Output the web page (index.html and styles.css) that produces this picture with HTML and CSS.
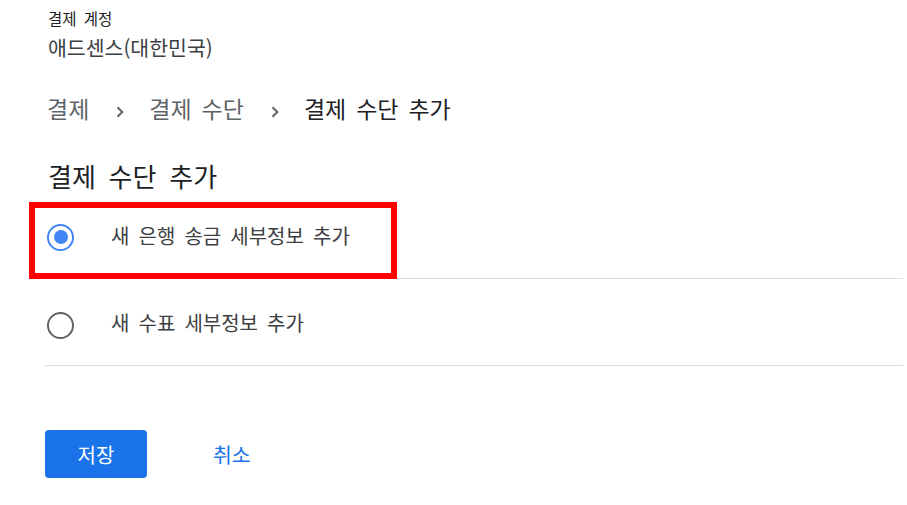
FILE: index.html
```html
<!DOCTYPE html>
<html lang="ko">
<head>
<meta charset="utf-8">
<link rel="stylesheet" href="styles.css">
</head>
<body>
<div class="page">
  <div class="account">
    <div class="account-label">결제 계정</div>
    <div class="account-name">애드센스(대한민국)</div>
  </div>
  <nav class="crumbs">
    <span class="crumb">결제</span>
    <svg class="sep" width="8" height="12" viewBox="0 0 8 12"><path d="M1.5 1.2 L6.3 6 L1.5 10.8" fill="none" stroke="#5f6368" stroke-width="2"/></svg>
    <span class="crumb">결제 수단</span>
    <svg class="sep" width="8" height="12" viewBox="0 0 8 12"><path d="M1.5 1.2 L6.3 6 L1.5 10.8" fill="none" stroke="#5f6368" stroke-width="2"/></svg>
    <span class="crumb current">결제 수단 추가</span>
  </nav>
  <h1 class="title">결제 수단 추가</h1>
  <div class="options">
    <label class="option selected">
      <span class="radio"><span class="dot"></span></span>
      <span class="option-text">새 은행 송금 세부정보 추가</span>
      <span class="highlight"></span>
    </label>
    <label class="option">
      <span class="radio"></span>
      <span class="option-text">새 수표 세부정보 추가</span>
    </label>
  </div>
  <div class="actions">
    <button class="btn-save">저장</button>
    <button class="btn-cancel">취소</button>
  </div>
</div>
</body>
</html>
```
FILE: styles.css
```css
html, body {
  margin: 0;
  padding: 0;
  background: #ffffff;
}
body {
  font-family: "Noto Sans CJK KR", "Noto Sans", sans-serif;
  color: #202124;
}
.page {
  padding: 0 4px 0 45px;
}
.account {
  padding: 6px 0 0 3px;
}
.account-label {
  font-size: 15.5px;
  word-spacing: 3px;
  line-height: 24px;
  color: #202124;
}
.account-name {
  font-size: 20.5px;
  line-height: 34px;
  color: #3c4043;
}
.crumbs {
  display: flex;
  align-items: center;
  margin-top: 26px;
  padding-left: 2px;
  height: 36px;
  font-size: 23px;
  word-spacing: 3.5px;
  color: #5f6368;
}
.sep {
  margin: 8px 25px 0 27px;
  flex-shrink: 0;
}
.crumb.current {
  color: #202124;
}
.title {
  margin: 0;
  padding: 34px 0 0 3px;
  font-size: 26px;
  word-spacing: 5.5px;
  font-weight: 400;
  line-height: 32px;
  color: #202124;
}
.option {
  position: relative;
  display: flex;
  align-items: center;
  height: 86px;
  border-bottom: 1px solid #dadce0;
}
.radio {
  box-sizing: border-box;
  width: 27px;
  height: 27px;
  margin: 6px 0 0 2px;
  border: 2.5px solid #5f6368;
  border-radius: 50%;
  display: flex;
  align-items: center;
  justify-content: center;
  flex-shrink: 0;
}
.selected .radio {
  margin-top: 4px;
  border-color: #4285f4;
}
.dot {
  width: 14px;
  height: 14px;
  border-radius: 50%;
  background: #4285f4;
}
.option-text {
  margin-left: 37px;
  font-size: 20px;
  word-spacing: 3.5px;
  color: #3c4043;
}
.highlight {
  position: absolute;
  left: -16px;
  top: 10px;
  width: 368px;
  height: 77px;
  box-sizing: border-box;
  border: 6px solid #ff0000;
}
.actions {
  display: flex;
  align-items: center;
  margin-top: 64px;
}
.btn-save {
  width: 102px;
  height: 48px;
  border: none;
  border-radius: 4px;
  background: #1a73e8;
  color: #ffffff;
  font-family: inherit;
  font-size: 20px;
}
.btn-cancel {
  margin-left: 46px;
  padding: 0 20px;
  height: 48px;
  border: none;
  background: transparent;
  color: #1a73e8;
  font-family: inherit;
  font-size: 20.5px;
}
```
